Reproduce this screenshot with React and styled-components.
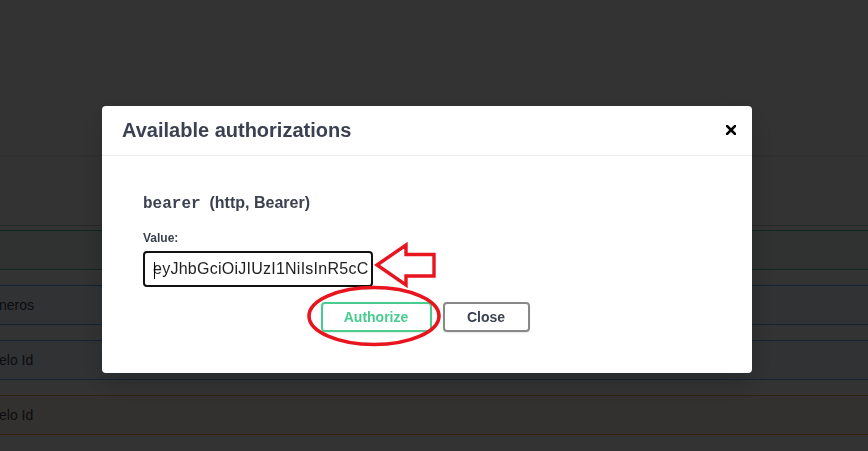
import styled, { createGlobalStyle } from "styled-components";

const GlobalStyle = createGlobalStyle`
  html, body {
    margin: 0;
    padding: 0;
    background: #ffffff;
    font-family: "Liberation Sans", Arial, sans-serif;
  }
  * { box-sizing: border-box; }
`;

const rows = [
  { kind: "post", text: "" },
  { kind: "get", text: "neros" },
  { kind: "get", text: "elo Id" },
  { kind: "put", text: "elo Id" },
];

const rowColors = {
  post: { border: "#49cc90", bg: "rgba(73, 204, 144, 0.1)" },
  get: { border: "#61affe", bg: "rgba(97, 175, 254, 0.1)" },
  put: { border: "#fca130", bg: "rgba(252, 161, 48, 0.1)" },
};

const App = () => {
  return (
    <>
      <GlobalStyle />
      <Page>
        <SchemeBar />
        <TagSection>
          <TagHeader />
          {rows.map((r, i) => (
            <OpRow key={i} kind={r.kind}>
              <OpText>{r.text}</OpText>
            </OpRow>
          ))}
        </TagSection>
      </Page>

      <Backdrop>
        <Modal>
          <ModalHeader>
            <ModalTitle>Available authorizations</ModalTitle>
            <CloseIcon width="10" height="10" viewBox="0 0 10 10">
              <path d="M1 1 L9 9 M9 1 L1 9" stroke="#000" strokeWidth="2.6" strokeLinecap="square" />
            </CloseIcon>
          </ModalHeader>

          <ModalBody>
            <SchemeTitle>
              <code>bearer</code>&nbsp; (http, Bearer)
            </SchemeTitle>
            <FieldLabel>Value:</FieldLabel>
            <InputRow>
              <TokenBox>
                <TokenText>eyJhbGciOiJIUzI1NiIsInR5cC</TokenText>
              </TokenBox>
              <Arrow width="66" height="46" viewBox="0 0 66 46">
                <path
                  d="M4 23 L33 3 L33 12.5 L61 12.5 L61 34 L33 34 L33 43 Z"
                  fill="#fff"
                  stroke="#e8141e"
                  strokeWidth="3.4"
                  strokeLinejoin="miter"
                />
              </Arrow>
            </InputRow>

            <ButtonRow>
              <AuthorizeWrap>
                <ModalButton variant="authorize">Authorize</ModalButton>
                <Circle width="138" height="64" viewBox="0 0 138 64">
                  <ellipse cx="69" cy="32" rx="65" ry="28.5" fill="none" stroke="#e8141e" strokeWidth="3.6" />
                </Circle>
              </AuthorizeWrap>
              <ModalButton variant="close">Close</ModalButton>
            </ButtonRow>
          </ModalBody>
        </Modal>
      </Backdrop>
    </>
  );
};

export default App;

const Page = styled.div`
  width: 100%;
  min-height: 451px;
  background: #fff;
  overflow: hidden;
`;

const SchemeBar = styled.div`
  height: 155px;
  background: #fff;
  box-shadow: 0 1px 2px 0 rgba(0, 0, 0, 0.15);
`;

const TagSection = styled.div`
  padding-top: 70px;
`;

const TagHeader = styled.div`
  height: 1px;
  background: rgba(59, 65, 81, 0.3);
  margin-bottom: 4px;
`;

const OpRow = styled.div`
  height: 40px;
  margin-bottom: 15px;
  display: flex;
  align-items: center;
  border-top: 1px solid ${(p) => rowColors[p.kind].border};
  border-bottom: 1px solid ${(p) => rowColors[p.kind].border};
  background: ${(p) => rowColors[p.kind].bg};
`;

const OpText = styled.span`
  font-size: 14px;
  color: #3b4151;
  margin-left: -1px;
`;

const Backdrop = styled.div`
  position: fixed;
  inset: 0;
  background: rgba(0, 0, 0, 0.8);
  display: flex;
  align-items: flex-start;
  padding: 106px 0 0 102px;
`;

const Modal = styled.div`
  width: 650px;
  height: 267px;
  background: #fff;
  border-radius: 4px;
  box-shadow: 0 10px 30px 0 rgba(0, 0, 0, 0.2);
  display: flex;
  flex-direction: column;
`;

const ModalHeader = styled.div`
  height: 50px;
  display: flex;
  align-items: center;
  justify-content: space-between;
  padding: 0 16px 1px 20px;
  border-bottom: 1px solid #ebebeb;
`;

const ModalTitle = styled.h3`
  margin: 0;
  font-size: 20px;
  font-weight: 700;
  color: #3b4151;
  font-family: "Liberation Sans", Arial, sans-serif;
`;

const CloseIcon = styled.svg`
  display: block;
`;

const ModalBody = styled.div`
  padding: 37px 20px 0 41px;
`;

const SchemeTitle = styled.h4`
  margin: 0;
  font-size: 16px;
  font-weight: 700;
  line-height: 20px;
  color: #3b4151;

  code {
    font-family: "Liberation Mono", "DejaVu Sans Mono", monospace;
    font-size: 16px;
    font-weight: 700;
  }
`;

const FieldLabel = styled.div`
  margin-top: 17px;
  font-size: 12px;
  font-weight: 700;
  line-height: 14px;
  color: #3b4151;
`;

const InputRow = styled.div`
  position: relative;
  margin-top: 6px;
  display: flex;
  align-items: center;
`;

const TokenBox = styled.div`
  width: 230px;
  height: 36px;
  border: 2px solid #111;
  border-radius: 4px;
  padding: 0 4px 0 8px;
  display: flex;
  align-items: center;
  overflow: hidden;
  white-space: nowrap;
  position: relative;

  &::before {
    content: "";
    position: absolute;
    left: 9px;
    top: 9px;
    width: 1px;
    height: 17px;
    background: #000;
  }
`;

const TokenText = styled.span`
  font-size: 16px;
  color: #222;
  letter-spacing: 0.25px;
`;

const Arrow = styled.svg`
  position: absolute;
  left: 230px;
  top: -9px;
`;

const ButtonRow = styled.div`
  margin-top: 15px;
  margin-left: -21px;
  display: flex;
  justify-content: center;
  gap: 11px;
  padding-right: 4px;
`;

const AuthorizeWrap = styled.div`
  position: relative;
`;

const Circle = styled.svg`
  position: absolute;
  left: -16px;
  top: -18px;
  pointer-events: none;
`;

const ModalButton = styled.button`
  height: 30px;
  width: ${(p) => (p.variant === "authorize" ? "111px" : "87px")};
  border-radius: 4px;
  background: transparent;
  font-family: "Liberation Sans", Arial, sans-serif;
  font-size: 14px;
  font-weight: 700;
  border: 2px solid ${(p) => (p.variant === "authorize" ? "#49cc90" : "#888")};
  color: ${(p) => (p.variant === "authorize" ? "#49cc90" : "#3b4151")};
  box-shadow: 0 1px 2px rgba(0, 0, 0, 0.1);
  cursor: pointer;
`;
